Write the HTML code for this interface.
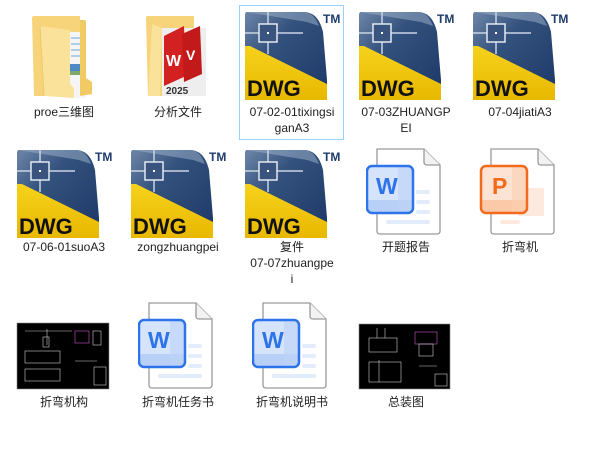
<!DOCTYPE html>
<html><head><meta charset="utf-8"><style>
body{margin:0;width:604px;height:458px;background:#fff;position:relative;overflow:hidden;font-family:"Liberation Sans","Noto Sans CJK SC",sans-serif}
.a{position:absolute}
.l{position:absolute;width:110px;text-align:center;font-size:12px;line-height:16px;color:#1e1e1e}
svg{position:absolute;overflow:visible}
</style></head><body>
<svg width="0" height="0" style="position:absolute">
<defs>
<linearGradient id="bg" x1="0" y1="0" x2="1" y2="1"><stop offset="0" stop-color="#6e86a8"/><stop offset=".35" stop-color="#34527e"/><stop offset="1" stop-color="#1c3766"/></linearGradient>
<linearGradient id="yg" x1="0" y1="0" x2="0" y2="1"><stop offset="0" stop-color="#f6d21c"/><stop offset="1" stop-color="#e8b800"/></linearGradient>
<symbol id="dwg" viewBox="0 0 96 92">
<path d="M1,2 L60,2 C70,3 75,10 78,22 L82,70 L82,90 L0,90 L0,4Z" fill="url(#bg)"/>
<path d="M1,2 L60,2 C67,3 71,8 74,16 L62,12 Z" fill="#9fb3cc" opacity=".5"/>
<line x1="0" y1="23" x2="58" y2="23" stroke="#c9d4e3" stroke-width="1.5"/>
<line x1="23" y1="2" x2="23" y2="44" stroke="#c9d4e3" stroke-width="1.5"/>
<rect x="14" y="14" width="18" height="18" fill="#39557f" stroke="#e3e9f1" stroke-width="1.5"/>
<rect x="22" y="22" width="2" height="2" fill="#fff"/>
<path d="M0,36 L5,36 L82,74 L82,90 L0,90Z" fill="url(#yg)"/>
<text x="2" y="86" font-family="Liberation Sans" font-weight="bold" font-size="22" fill="#111">DWG</text>
<text x="78" y="13" font-family="Liberation Sans" font-weight="bold" font-size="12" fill="#1d3b6b">TM</text>
</symbol>
<symbol id="doc" viewBox="0 0 80 90">
<path d="M11,1 H58 L74,17 V83 Q74,86 71,86 H14 Q11,86 11,83Z" fill="#fff" stroke="#9a9a9a" stroke-width="1.3"/>
<path d="M58,1 V14 Q58,17 61,17 H74" fill="#f2f2f2" stroke="#9a9a9a" stroke-width="1.3"/>
</symbol>
<symbol id="word" viewBox="0 0 80 90">
<use href="#doc" width="80" height="90"/>
<rect x="50" y="42" width="14" height="4" rx="2" fill="#e3ecfa"/>
<rect x="50" y="52" width="14" height="4" rx="2" fill="#e3ecfa"/>
<rect x="50" y="62" width="14" height="4" rx="2" fill="#e3ecfa"/>
<rect x="20" y="72" width="44" height="4" rx="2" fill="#e3ecfa"/>
<rect x="1" y="18" width="46" height="47" rx="5" fill="#d5e3fb"/>
<path d="M2,52 H46 V60 Q46,64 42,64 H6 Q2,64 2,60Z" fill="#b8cff6"/>
<rect x="32" y="19" width="14" height="45" fill="#bcd2f7" opacity=".6"/>
<rect x="1" y="18" width="46" height="47" rx="5" fill="none" stroke="#2d73ea" stroke-width="2.5"/>
<text x="10" y="46" font-family="Liberation Sans" font-weight="bold" font-size="23" fill="#2d73ea">W</text>
</symbol>
</defs></svg>

<div class="a" style="left:239px;top:5px;width:103px;height:133px;border:1px solid #99d1ff;background:#fff"></div>

<svg style="left:32px;top:16px" width="62" height="84" viewBox="0 0 62 84">
<path d="M0,2 Q0,0 2,0 H48 V80 H2 Z" fill="#f7d47a"/>
<rect x="36" y="16" width="18" height="66" fill="#f5f5f5"/>
<g stroke="#6aa7e0" stroke-width="1"><line x1="39" y1="22" x2="50" y2="22"/><line x1="39" y1="28" x2="50" y2="28"/><line x1="39" y1="34" x2="50" y2="34"/><line x1="39" y1="40" x2="50" y2="40"/></g>
<rect x="38" y="48" width="13" height="11" fill="#4c8ac6"/><rect x="38" y="55" width="13" height="4" fill="#7fa86a"/>
<path d="M48,4 H52 Q54,4 54,6 V62 L60,66 V78 L48,80Z" fill="#f2ca63"/>
<path d="M8,10 L38,14 V68 L42,72 V82 L12,80 Z" fill="#fbe29a"/>
<path d="M8,10 L12,80" stroke="#eccb6a" fill="none"/>
</svg>
<div class="l" style="left:9px;top:104px">proe三维图</div>

<svg style="left:146px;top:16px" width="62" height="84" viewBox="0 0 62 84">
<path d="M0,2 Q0,0 2,0 H48 V80 H2 Z" fill="#f7d47a"/>
<rect x="16" y="12" width="44" height="68" fill="#eee"/>
<path d="M18,20 L38,10 L40,60 L18,70Z" fill="#d32020"/>
<path d="M36,18 L54,10 L56,58 L38,66Z" fill="#c21a1a"/>
<text x="20" y="50" font-size="16" font-weight="bold" fill="#fff" font-family="Liberation Sans">W</text>
<text x="40" y="44" font-size="14" font-weight="bold" fill="#fff" font-family="Liberation Sans">V</text>
<text x="20" y="78" font-size="10" font-weight="bold" fill="#333" font-family="Liberation Sans">2025</text>
<path d="M6,8 L16,12 L14,80 L2,80Z" fill="#fbe29a"/>
</svg>
<div class="l" style="left:123px;top:104px">分析文件</div>

<svg style="left:245px;top:10px" width="96" height="92"><use href="#dwg" width="96" height="92"/></svg>
<div class="l" style="left:237px;top:104px">07-02-01tixingsi<br>ganA3</div>
<svg style="left:359px;top:10px" width="96" height="92"><use href="#dwg" width="96" height="92"/></svg>
<div class="l" style="left:351px;top:104px">07-03ZHUANGP<br>EI</div>
<svg style="left:473px;top:10px" width="96" height="92"><use href="#dwg" width="96" height="92"/></svg>
<div class="l" style="left:465px;top:104px">07-04jiatiA3</div>

<svg style="left:17px;top:148px" width="96" height="92"><use href="#dwg" width="96" height="92"/></svg>
<div class="l" style="left:9px;top:239px">07-06-01suoA3</div>
<svg style="left:131px;top:148px" width="96" height="92"><use href="#dwg" width="96" height="92"/></svg>
<div class="l" style="left:123px;top:239px">zongzhuangpei</div>
<svg style="left:245px;top:148px" width="96" height="92"><use href="#dwg" width="96" height="92"/></svg>
<div class="l" style="left:237px;top:239px">复件<br>07-07zhuangpe<br>i</div>

<svg style="left:366px;top:148px" width="80" height="90"><use href="#word" width="80" height="90"/></svg>
<div class="l" style="left:351px;top:239px">开题报告</div>

<svg style="left:480px;top:148px" width="80" height="90" viewBox="0 0 80 90">
<use href="#doc" width="80" height="90"/>
<rect x="38" y="40" width="26" height="28" fill="#fde9de"/>
<rect x="20" y="72" width="20" height="4" rx="2" fill="#fde9de"/>
<rect x="1" y="18" width="46" height="47" rx="5" fill="#fde3d3"/>
<path d="M2,52 H46 V60 Q46,64 42,64 H6 Q2,64 2,60Z" fill="#fbc8a8"/>
<rect x="32" y="19" width="14" height="45" fill="#fbcfb2" opacity=".6"/>
<rect x="1" y="18" width="46" height="47" rx="5" fill="none" stroke="#f26a1b" stroke-width="2.5"/>
<text x="12" y="46" font-family="Liberation Sans" font-weight="bold" font-size="23" fill="#f26a1b">P</text>
</svg>
<div class="l" style="left:465px;top:239px">折弯机</div>

<svg style="left:17px;top:323px" width="92" height="66" viewBox="0 0 92 66">
<rect width="92" height="66" fill="#000" stroke="#888" stroke-width=".6"/>
<g stroke="#ccc" stroke-width=".6" fill="none">
<line x1="8" y1="8" x2="55" y2="8"/><line x1="30" y1="6" x2="30" y2="22"/><rect x="26" y="14" width="6" height="10"/>
<rect x="8" y="28" width="35" height="12"/><rect x="8" y="46" width="35" height="12"/>
<rect x="58" y="8" width="14" height="12" stroke="#c5c"/><rect x="76" y="8" width="8" height="14"/>
<line x1="58" y1="38" x2="80" y2="38"/><rect x="77" y="44" width="12" height="18"/>
</g></svg>
<div class="l" style="left:9px;top:394px">折弯机构</div>

<svg style="left:138px;top:302px" width="80" height="90"><use href="#word" width="80" height="90"/></svg>
<div class="l" style="left:123px;top:394px">折弯机任务书</div>
<svg style="left:252px;top:302px" width="80" height="90"><use href="#word" width="80" height="90"/></svg>
<div class="l" style="left:237px;top:394px">折弯机说明书</div>

<svg style="left:359px;top:324px" width="91" height="65" viewBox="0 0 91 65">
<rect width="91" height="65" fill="#000" stroke="#888" stroke-width=".6"/>
<g stroke="#ccc" stroke-width=".6" fill="none">
<rect x="10" y="14" width="28" height="14"/><line x1="18" y1="4" x2="18" y2="14"/><line x1="26" y1="4" x2="26" y2="14"/>
<rect x="10" y="38" width="32" height="20"/><line x1="20" y1="36" x2="20" y2="58"/>
<rect x="56" y="8" width="22" height="12" stroke="#c5c"/><rect x="60" y="20" width="14" height="12"/>
<line x1="60" y1="42" x2="78" y2="42"/><rect x="76" y="50" width="12" height="12"/>
</g></svg>
<div class="l" style="left:351px;top:394px">总装图</div>
</body></html>
